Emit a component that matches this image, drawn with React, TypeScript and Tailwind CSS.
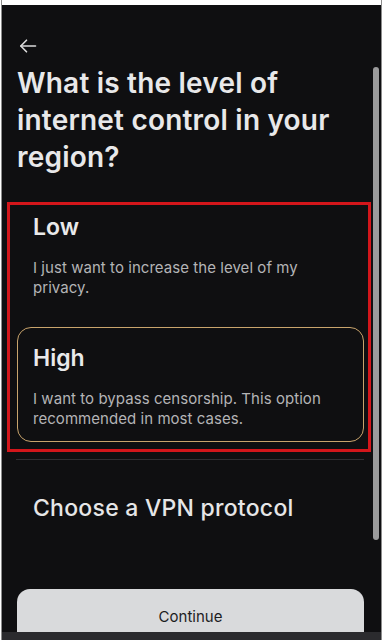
import React, { useState } from 'react';

type Level = 'low' | 'high';

interface OptionProps {
  title: string;
  text: string;
  selected: boolean;
  className?: string;
  onSelect: () => void;
}

const font = { fontFamily: 'Inter, "Noto Sans", sans-serif' };

const LevelOption: React.FC<OptionProps> = ({ title, text, selected, className = '', onSelect }) => (
  <button
    type="button"
    onClick={onSelect}
    className={`block w-full rounded-[14px] border px-[15px] pb-[13px] text-left ${
      selected ? 'border-[#c9a46c]' : 'border-transparent'
    } ${className}`}
  >
    <div className="text-[23px] font-semibold leading-[28px] text-[#e9e9ea]">{title}</div>
    <p className="mt-[17px] text-[15px] leading-[19.5px] tracking-[0.05px] text-[#b4b4b6]">{text}</p>
  </button>
);

const BackArrow = () => (
  <svg width="18" height="14" viewBox="0 0 18 14" fill="none" stroke="#dcdcdc" strokeWidth="1.6" strokeLinecap="round" strokeLinejoin="round">
    <path d="M16.5 7H2" />
    <path d="M7.5 1.2 1.8 7l5.7 5.8" />
  </svg>
);

export default function App() {
  const [level, setLevel] = useState<Level>('high');

  return (
    <div className="h-[640px] w-[385px] overflow-hidden bg-white" style={font}>
      <div className="ml-px flex h-full w-[381px] flex-col border-x border-[#8c8c8c]">
        <div className="h-[5px] shrink-0 bg-white" />
        <div className="flex min-h-0 flex-1 overflow-hidden bg-[#0f0f11]">
          {/* page content */}
          <div className="min-w-0 flex-1 pl-[15px] pr-[7px]">
            <div className="ml-[2px] pt-[34px]">
              <BackArrow />
            </div>
            <h1 className="mt-[12px] text-[28px] font-semibold leading-[37px] tracking-[0.2px] text-[#e8e8e9]">
              What is the level of internet control in your region?
            </h1>

            <div className="-ml-[10px] -mr-[7px] mt-[26px] border-[3px] border-[#d3161b] pb-[7px] pl-[7px] pr-[4px]">
              <LevelOption
                title="Low"
                text="I just want to increase the level of my privacy."
                selected={level === 'low'}
                className="pt-[7px]"
                onSelect={() => setLevel('low')}
              />
              <LevelOption
                title="High"
                text="I want to bypass censorship. This option recommended in most cases."
                selected={level === 'high'}
                className="mt-[16px] pt-[16px]"
                onSelect={() => setLevel('high')}
              />
            </div>

            <div className="-ml-px mt-[7px] h-px bg-[#2f2f32]" />

            <div className="mt-[34px] pl-[16px] text-[23px] font-medium leading-[28px] tracking-[0.25px] text-[#e6e6e7]">
              Choose a VPN protocol
            </div>

            <button
              type="button"
              className="mt-[67px] flex h-[56px] w-full justify-center rounded-[13px] bg-[#d9dadc] pt-[18px] text-[15px] leading-[20px] text-[#1d1d1f]"
            >
              Continue
            </button>
          </div>

          {/* scrollbar */}
          <div className="w-[10px] shrink-0 px-[2px] pt-[62px]">
            <div className="h-[473px] w-[6px] rounded-full bg-[#9b9b9c]" />
          </div>
        </div>
        <div className="h-[8px] shrink-0 bg-[#2b2b2e]" />
      </div>
    </div>
  );
}
